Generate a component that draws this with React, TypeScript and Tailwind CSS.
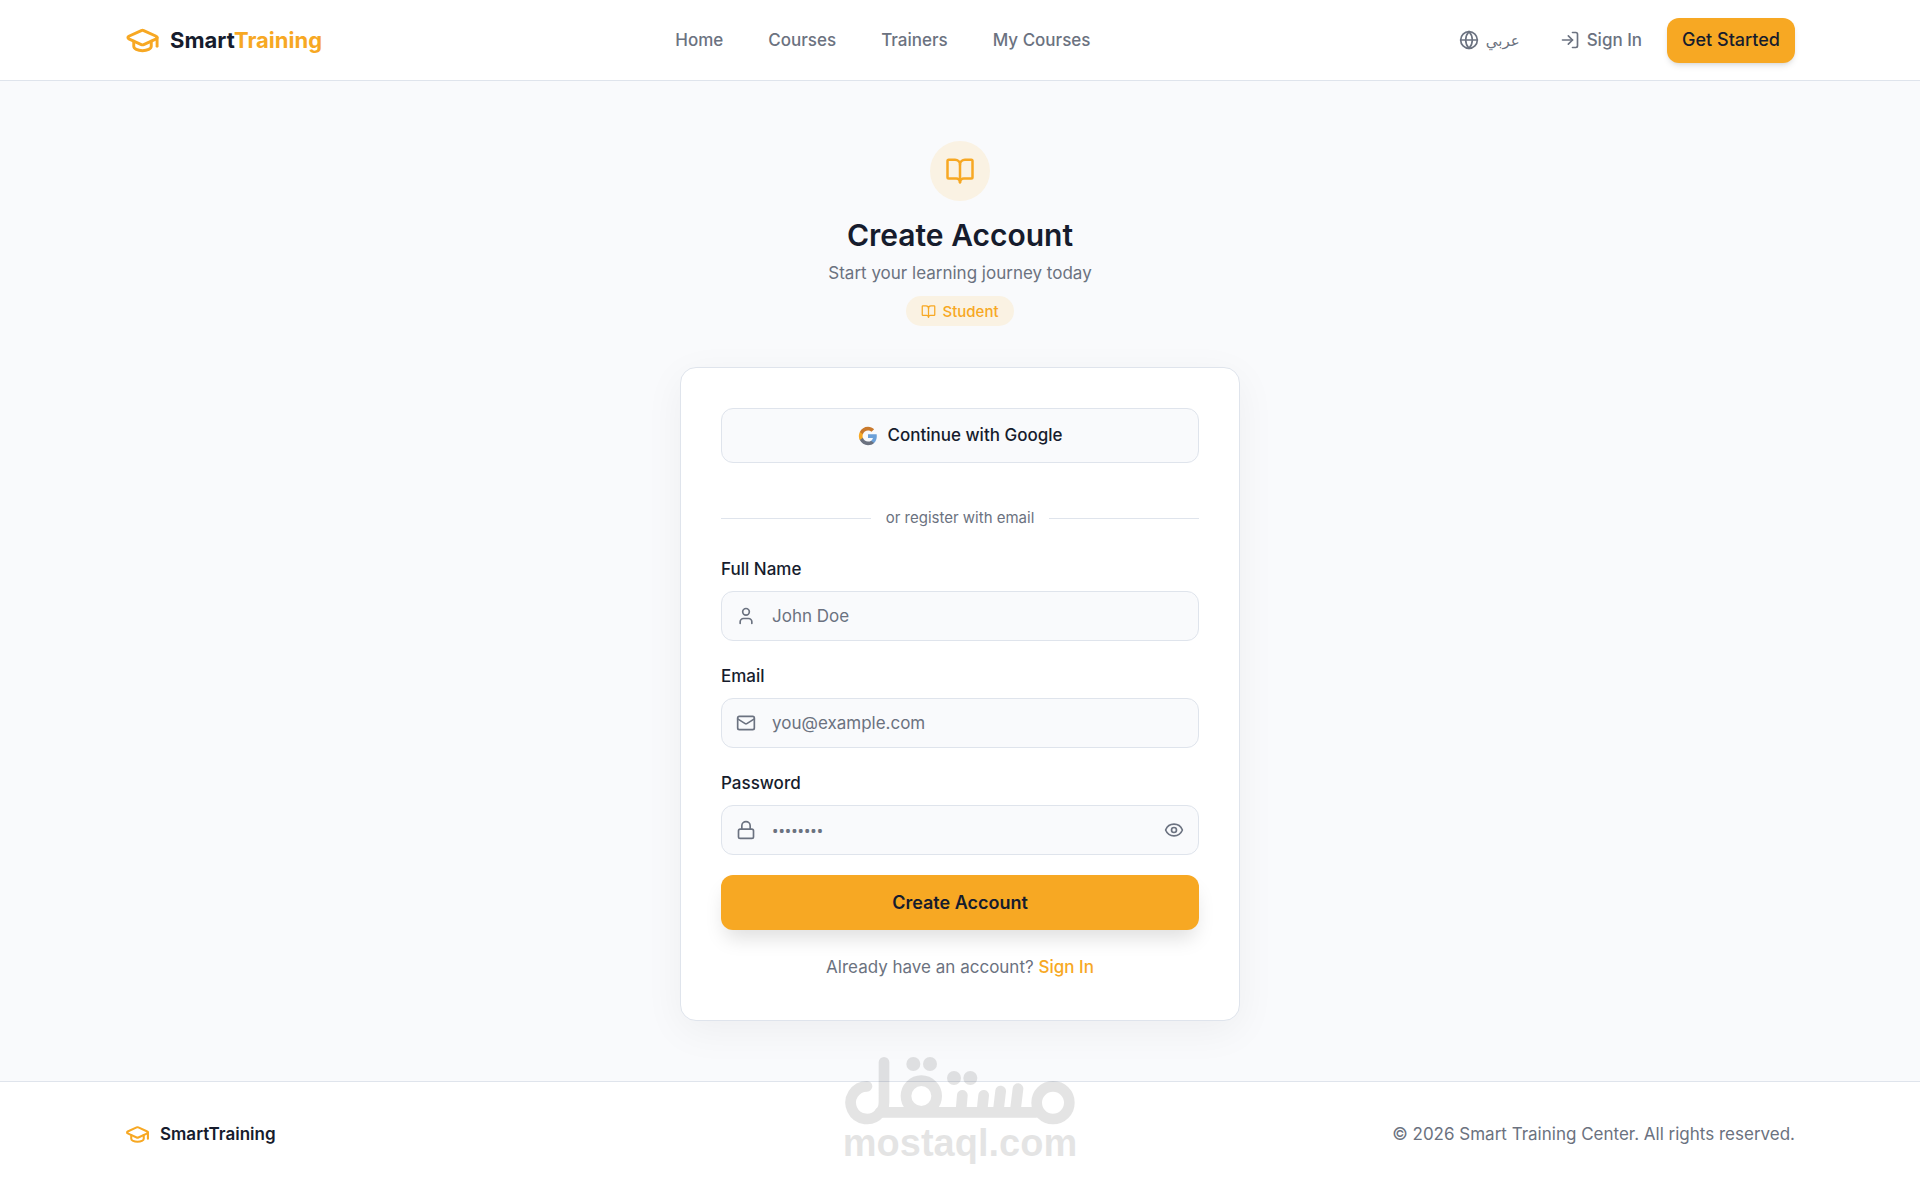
import { useState, type ReactNode } from "react";
import {
  BookOpen,
  Eye,
  EyeOff,
  Globe,
  GraduationCap,
  Lock,
  LogIn,
  Mail,
  User,
  type LucideIcon,
} from "lucide-react";

const NAV_LINKS = ["Home", "Courses", "Trainers", "My Courses"];

function GoogleIcon() {
  return (
    <svg viewBox="0 0 24 24" className="size-5" aria-hidden="true">
      <path
        fill="#6ba0d8"
        d="M22.56 12.25c0-.78-.07-1.53-.2-2.25H12v4.26h5.92c-.26 1.37-1.04 2.53-2.21 3.31v2.77h3.57c2.08-1.92 3.28-4.74 3.28-8.09z"
      />
      <path
        fill="#6b7280"
        d="M12 23c2.97 0 5.46-.98 7.28-2.66l-3.57-2.77c-.98.66-2.23 1.06-3.71 1.06-2.86 0-5.29-1.93-6.16-4.53H2.18v2.84C3.99 20.53 7.7 23 12 23z"
      />
      <path
        fill="#f7a823"
        d="M5.84 14.09c-.22-.66-.35-1.36-.35-2.09s.13-1.43.35-2.09V7.07H2.18C1.43 8.55 1 10.22 1 12s.43 3.45 1.18 4.93l2.85-2.22.81-.62z"
      />
      <path
        fill="#c9792c"
        d="M12 5.38c1.62 0 3.06.56 4.21 1.64l3.15-3.15C17.45 2.09 14.97 1 12 1 7.7 1 3.99 3.47 2.18 7.07l3.66 2.84c.87-2.6 3.3-4.53 6.16-4.53z"
      />
    </svg>
  );
}

/** Mostaql mark: a round-capped wordmark stamped over the bottom of the page. */
function Watermark() {
  return (
    <div
      className="pointer-events-none absolute bottom-[26px] left-1/2 flex w-[230px] -translate-x-1/2 flex-col items-center opacity-10"
      aria-hidden="true"
    >
      <svg viewBox="75 78 690 207" className="w-full" fill="none" stroke="#000" strokeLinecap="round">
        <g strokeWidth="32">
          <path d="M141 169a49 49 0 1 0 38 80q13-11 13-34V97" />
          <path d="M180 247H648" />
          <circle cx="304" cy="198" r="46" />
          <circle cx="699" cy="218" r="49" />
          <path d="M427 196l-4 46M491 196l-5 46M542 183l-7 59M594 176l-8 66" />
        </g>
        <g fill="#000" stroke="none">
          <circle cx="280" cy="102" r="21" />
          <circle cx="330" cy="102" r="21" />
          <circle cx="402" cy="144" r="21" />
          <circle cx="451" cy="144" r="21" />
        </g>
      </svg>
      <span className="font-['Liberation_Sans',sans-serif] text-[38px] leading-9 font-bold text-black">
        mostaql.com
      </span>
    </div>
  );
}

function Header() {
  return (
    <header className="border-b border-[#dfe4ec] bg-white">
      <div className="mx-auto flex h-20 max-w-[1750px] items-center justify-between px-10">
        <a href="#" className="flex items-center gap-2.5">
          <GraduationCap className="size-[35px] text-[#f7a823]" />
          <span className="text-[22px] font-bold text-[#161c2d]">
            Smart<span className="text-[#f7a823]">Training</span>
          </span>
        </a>

        <nav className="flex items-center gap-[45px]">
          {NAV_LINKS.map((label) => (
            <a key={label} href="#" className="font-medium text-[#6b7280]">
              {label}
            </a>
          ))}
        </nav>

        <div className="flex items-center gap-2.5">
          <button type="button" className="flex h-[45px] items-center gap-[7px] px-[15px] text-[#6b7280]">
            <Globe className="size-5" />
            <span lang="ar" className="text-[15px]">
              عربي
            </span>
          </button>
          <a href="#" className="flex h-[45px] items-center gap-[7px] px-[15px] font-medium text-[#6b7280]">
            <LogIn className="size-5" />
            Sign In
          </a>
          <a
            href="#"
            className="flex h-[45px] items-center rounded-xl bg-[#f7a823] px-[15px] text-lg font-medium text-[#161c2d] shadow-md"
          >
            Get Started
          </a>
        </div>
      </div>
    </header>
  );
}

function Field({
  id,
  label,
  type,
  placeholder,
  icon: Icon,
  children,
}: {
  id: string;
  label: string;
  type: string;
  placeholder: string;
  icon: LucideIcon;
  children?: ReactNode;
}) {
  return (
    <div className="flex flex-col gap-2.5">
      <label htmlFor={id} className="leading-[23px] font-medium text-[#161c2d]">
        {label}
      </label>
      <div className="relative">
        <Icon className="absolute top-[15px] left-[15px] size-5 text-[#6b7280]" />
        <input
          id={id}
          type={type}
          placeholder={placeholder}
          className="h-[50px] w-full rounded-xl border border-[#dfe4ec] bg-[#f9fafc] px-[50px] text-[#161c2d] outline-none placeholder:text-[#6b7280] focus-visible:ring-2 focus-visible:ring-[#f7a823] [&[id=password]]:font-['Noto_Sans',sans-serif]"
        />
        {children}
      </div>
    </div>
  );
}

function RegisterCard() {
  const [visible, setVisible] = useState(false);

  return (
    <div className="w-full rounded-2xl border border-[#dfe4ec] bg-white p-10 shadow-[0_10px_40px_rgba(0,0,0,0.05)]">
      <button
        type="button"
        className="flex h-[55px] w-full items-center justify-center gap-2.5 rounded-xl border border-[#dfe4ec] bg-[#f9fafc] font-medium text-[#161c2d]"
      >
        <GoogleIcon />
        Continue with Google
      </button>

      <div className="mt-[45px] mb-[30px] flex items-center gap-[15px]">
        <span className="h-px flex-1 bg-[#dfe4ec]" />
        <span className="text-[15px] leading-5 text-[#6b7280]">or register with email</span>
        <span className="h-px flex-1 bg-[#dfe4ec]" />
      </div>

      <form onSubmit={(e) => e.preventDefault()}>
        <div className="flex flex-col gap-6">
          <Field id="name" label="Full Name" type="text" placeholder="John Doe" icon={User} />
          <Field id="email" label="Email" type="email" placeholder="you@example.com" icon={Mail} />
          <Field
            id="password"
            label="Password"
            type={visible ? "text" : "password"}
            placeholder="••••••••"
            icon={Lock}
          >
            <button
              type="button"
              aria-label={visible ? "Hide password" : "Show password"}
              onClick={() => setVisible(!visible)}
              className="absolute top-[15px] right-[15px] text-[#6b7280]"
            >
              {visible ? <EyeOff className="size-5" /> : <Eye className="size-5" />}
            </button>
          </Field>
        </div>
        <button
          type="submit"
          className="mt-5 h-[55px] w-full rounded-xl bg-[#f7a823] text-lg font-semibold text-[#161c2d] shadow-[0_12px_20px_-4px_rgba(0,0,0,0.13)]"
        >
          Create Account
        </button>
      </form>

      <p className="mt-[25px] text-center text-[#6b7280]">
        Already have an account?{" "}
        <a href="#" className="font-medium text-[#f7a823]">
          Sign In
        </a>
      </p>
    </div>
  );
}

export default function App() {
  return (
    <div className="relative flex min-h-screen flex-col bg-[#f9fafc] font-['Inter','DejaVu_Sans',sans-serif] text-[17px] leading-[25px]">
      <Header />

      <main className="mx-auto flex w-full max-w-[560px] flex-1 flex-col items-center pt-15 pb-14">
        <span className="flex size-15 items-center justify-center rounded-full bg-[#faf2e3]">
          <BookOpen className="size-[30px] text-[#f7a823]" />
        </span>
        <h1 className="mt-4 text-3xl font-semibold text-[#161c2d]">Create Account</h1>
        <p className="mt-2 text-[#6b7280]">Start your learning journey today</p>
        <span className="mt-2.5 mb-[41px] flex h-[30px] items-center gap-1.5 rounded-full bg-[#faf2e3] px-[15px] text-[15px] font-medium text-[#f7a823]">
          <BookOpen className="size-[15px]" />
          Student
        </span>
        <RegisterCard />
      </main>

      <footer className="border-t border-[#dfe4ec] bg-white">
        <div className="mx-auto flex max-w-[1750px] items-center justify-between p-10">
          <div className="flex items-center gap-2.5">
            <GraduationCap className="size-[25px] text-[#f7a823]" />
            <span className="font-semibold text-[#161c2d]">SmartTraining</span>
          </div>
          <p className="text-[#6b7280]">© 2026 Smart Training Center. All rights reserved.</p>
        </div>
      </footer>

      <Watermark />
    </div>
  );
}
